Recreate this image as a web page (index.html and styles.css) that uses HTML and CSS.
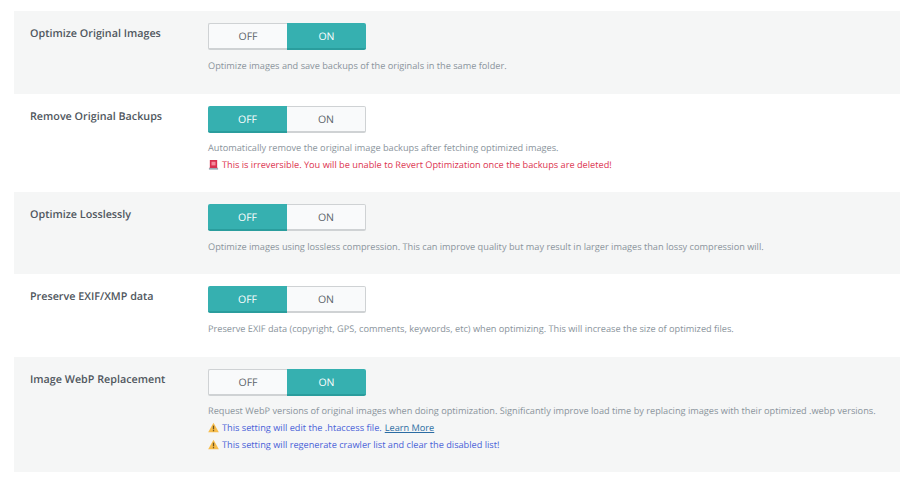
FILE: index.html
```html
<!DOCTYPE html>
<html lang="en">
<head>
<meta charset="utf-8">
<title>Image Optimization Settings</title>
<link rel="stylesheet" href="styles.css">
</head>
<body>
<div class="settings">
  <section class="row shaded r1">
    <h3 class="label">Optimize Original Images</h3>
    <div class="control">
      <div class="toggle"><span class="opt">OFF</span><span class="opt on">ON</span></div>
      <p class="desc first">Optimize images and save backups of the originals in the same folder.</p>
    </div>
  </section>
  <section class="row r2">
    <h3 class="label">Remove Original Backups</h3>
    <div class="control">
      <div class="toggle"><span class="opt on">OFF</span><span class="opt">ON</span></div>
      <p class="desc first">Automatically remove the original image backups after fetching optimized images.</p>
      <p class="desc danger"><svg class="ico" viewBox="0 0 12 12"><path d="M1 10.5L2 9V1h8v8l1 1.5z" fill="#d9304f"/><rect x="1" y="9.8" width="10" height="1.8" fill="#9aa8b4"/><rect x="3.8" y="3" width="4.4" height="4" fill="#f58a9c"/></svg>This is irreversible. You will be unable to Revert Optimization once the backups are deleted!</p>
    </div>
  </section>
  <section class="row shaded r3">
    <h3 class="label">Optimize Losslessly</h3>
    <div class="control">
      <div class="toggle"><span class="opt on">OFF</span><span class="opt">ON</span></div>
      <p class="desc first">Optimize images using lossless compression. This can improve quality but may result in larger images than lossy compression will.</p>
    </div>
  </section>
  <section class="row r4">
    <h3 class="label">Preserve EXIF/XMP data</h3>
    <div class="control">
      <div class="toggle"><span class="opt on">OFF</span><span class="opt">ON</span></div>
      <p class="desc first">Preserve EXIF data (copyright, GPS, comments, keywords, etc) when optimizing. This will increase the size of optimized files.</p>
    </div>
  </section>
  <section class="row shaded r5">
    <h3 class="label">Image WebP Replacement</h3>
    <div class="control">
      <div class="toggle"><span class="opt">OFF</span><span class="opt on">ON</span></div>
      <p class="desc first">Request WebP versions of original images when doing optimization. Significantly improve load time by replacing images with their optimized .webp versions.</p>
      <p class="desc warn"><svg class="ico" viewBox="0 0 12 12"><path d="M6 .8L11.8 11.2H.2z" fill="#f7bd4b"/><rect x="5.3" y="4" width="1.4" height="4" fill="#6b5320"/><rect x="5.3" y="8.8" width="1.4" height="1.3" fill="#6b5320"/></svg>This setting will edit the .htaccess file. <a href="#" class="more">Learn More</a></p>
      <p class="desc warn"><svg class="ico" viewBox="0 0 12 12"><path d="M6 .8L11.8 11.2H.2z" fill="#f7bd4b"/><rect x="5.3" y="4" width="1.4" height="4" fill="#6b5320"/><rect x="5.3" y="8.8" width="1.4" height="1.3" fill="#6b5320"/></svg>This setting will regenerate crawler list and clear the disabled list!</p>
    </div>
  </section>
</div>
</body>
</html>
```
FILE: styles.css
```css
html, body { margin: 0; padding: 0; background: #fff; }
body { font-family: "Open Sans", "Noto Sans", sans-serif; width: 900px; height: 482px; overflow: hidden; text-rendering: geometricPrecision; }
.settings { padding: 11px 0 0 14px; }
.row { display: flex; box-sizing: border-box; padding: 12px 0 0 16px; }
.shaded { background: #f5f6f6; }
.r1 { height: 83px; }
.r2 { height: 98px; }
.r3 { height: 82px; }
.r4 { height: 83px; }
.r5 { height: 115px; }
.label { margin: 4px 0 0; width: 178px; flex: none; font-size: 10.75px; line-height: 14px; font-weight: 600; color: #50575e; }
.control { flex: 1; }
.toggle { display: flex; width: 158px; height: 27px; }
.opt { width: 50%; display: flex; align-items: center; justify-content: center; box-sizing: border-box; padding-top: 1px; font-size: 10.5px; color: #5a6268; background: #f9fafb; border: 1px solid #cfd2d4; border-bottom-width: 2px; }
.opt:first-child { border-radius: 2px 0 0 2px; border-right: 0; }
.opt:last-child { border-radius: 0 2px 2px 0; border-left: 0; }
.opt.on { background: #36b0b0; color: #fff; border: 0; border-bottom: 2px solid #2a9d9d; padding-top: 2px; }
.desc { margin: 0; font-size: 9.2px; line-height: 17px; color: #8a949c; display: flex; align-items: center; white-space: nowrap; }
.desc.first { margin-top: 6px; }
.r1 .desc.first, .r3 .desc.first, .r4 .desc.first { margin-top: 7px; }
.danger { color: #dc3450; }
.warn { color: #4a62d8; }
.ico { width: 11px; height: 11px; margin-right: 3px; flex: none; }
.more { color: #2b6ca3; margin-left: 3px; }
```
